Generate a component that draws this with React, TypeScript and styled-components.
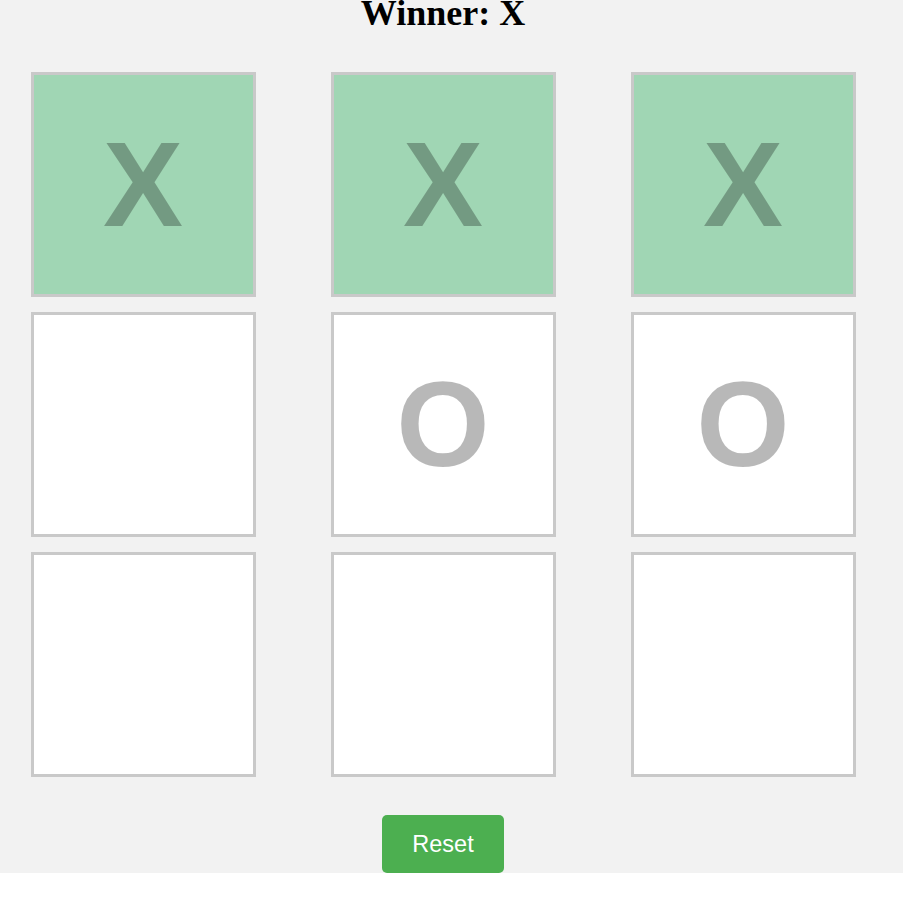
import React, { useState } from "react";
import styled, { createGlobalStyle } from "styled-components";

const Global = createGlobalStyle`
  html, body { margin: 0; padding: 0; background: #ffffff; }
  #root { width: 100%; }
`;

const Page = styled.div`
  background: #f2f2f2;
  display: flex;
  flex-direction: column;
  align-items: center;
  padding-right: 17px;
  overflow: visible;
`;

const Title = styled.h1`
  margin: -7px 0 0;
  font-family: "Liberation Serif", "Times New Roman", serif;
  font-weight: bold;
  font-size: 36px;
  line-height: 41px;
  color: #000;
`;

const Board = styled.div`
  margin-top: 38px;
  display: grid;
  grid-template-columns: repeat(3, 225px);
  grid-auto-rows: 225px;
  column-gap: 75px;
  row-gap: 15px;
`;

const Cell = styled.button<{ $win: boolean }>`
  box-sizing: border-box;
  width: 225px;
  height: 225px;
  margin: 0;
  padding: 0 0 2px;
  border: 3px solid #c9c9c9;
  background: ${(p) => (p.$win ? "#a0d6b4" : "#ffffff")};
  display: flex;
  align-items: center;
  justify-content: center;
  font-family: "Liberation Sans", Arial, sans-serif;
  font-weight: bold;
  font-size: 120px;
  line-height: 1;
  color: rgba(0, 0, 0, 0.28);
  cursor: pointer;
`;

const ResetButton = styled.button`
  margin-top: 38px;
  box-sizing: border-box;
  width: 122px;
  height: 58px;
  padding: 0;
  border: none;
  border-radius: 5px;
  background: #4caf50;
  color: #ffffff;
  font-family: "Liberation Sans", Arial, sans-serif;
  font-size: 23.5px;
  cursor: pointer;
`;

const initial = ["X", "X", "X", "", "O", "O", "", "", ""];
const winLine = [0, 1, 2];

export default function App() {
  const [cells, setCells] = useState<string[]>(initial);
  return (
    <>
      <Global />
      <Page>
        <Title>Winner: X</Title>
        <Board>
          {cells.map((c, i) => (
            <Cell key={i} $win={winLine.includes(i) && cells[0] === "X"}>
              {c}
            </Cell>
          ))}
        </Board>
        <ResetButton onClick={() => setCells(Array(9).fill(""))}>Reset</ResetButton>
      </Page>
    </>
  );
}
